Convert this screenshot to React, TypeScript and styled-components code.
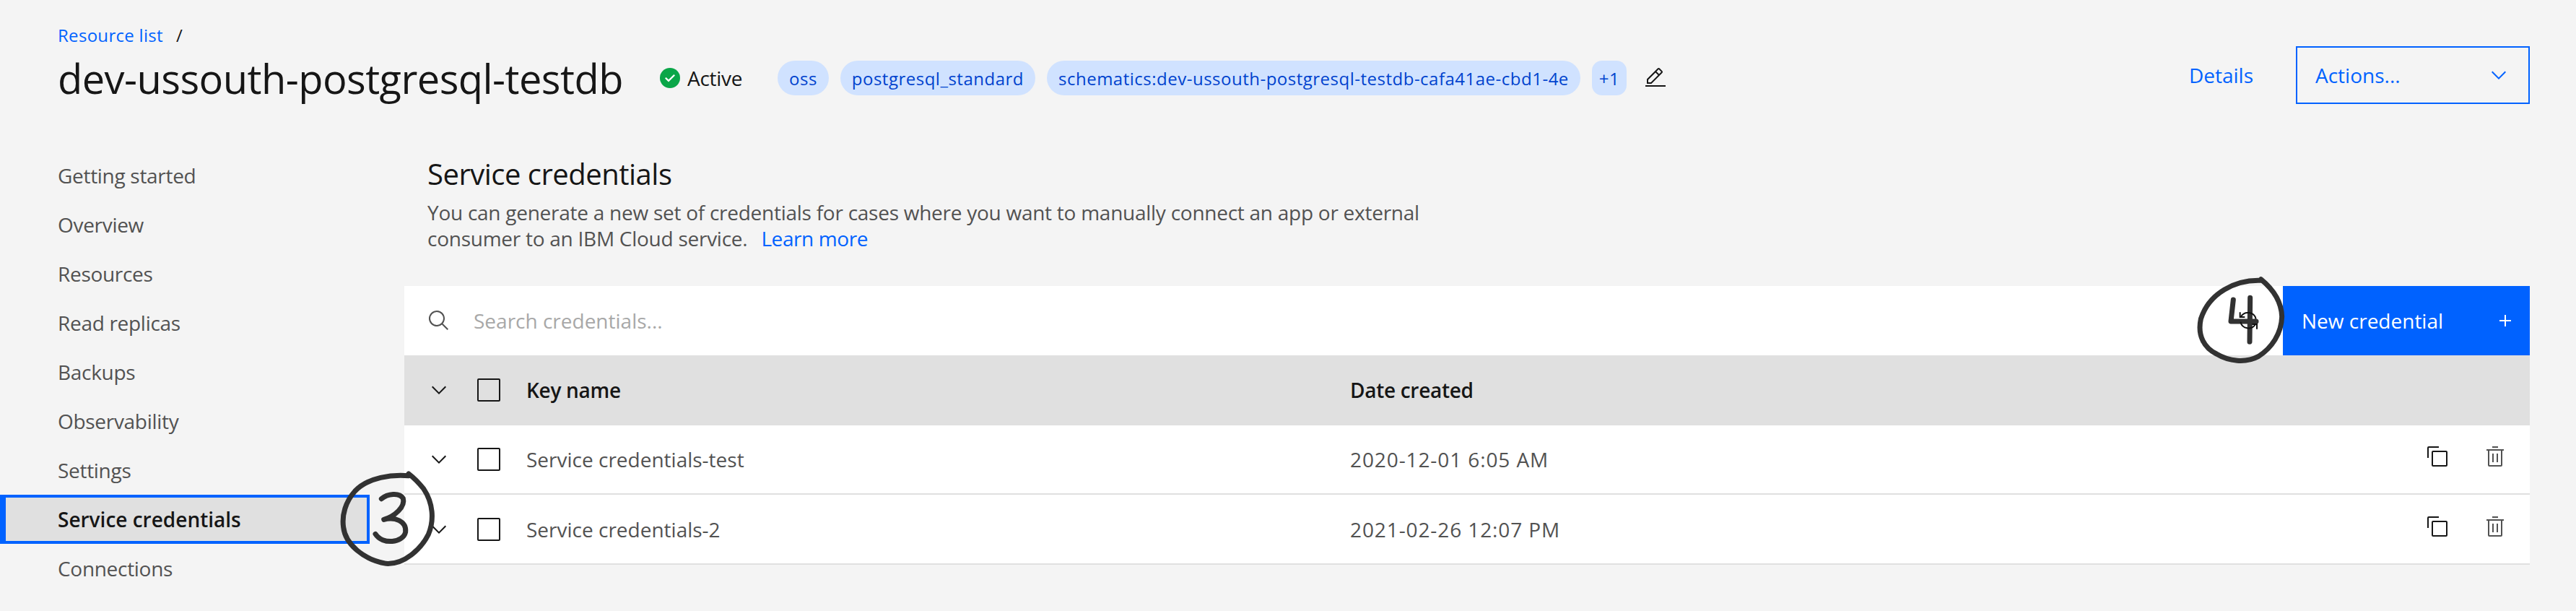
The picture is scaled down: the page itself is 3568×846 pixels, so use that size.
import React from "react";
import styled, { createGlobalStyle } from "styled-components";

const navItems = [
  "Getting started",
  "Overview",
  "Resources",
  "Read replicas",
  "Backups",
  "Observability",
  "Settings",
  "Service credentials",
  "Connections",
];

const tags = ["oss", "postgresql_standard", "schematics:dev-ussouth-postgresql-testdb-cafa41ae-cbd1-4e"];

const credentials = [
  { name: "Service credentials-test", date: "2020-12-01 6:05 AM" },
  { name: "Service credentials-2", date: "2021-02-26 12:07 PM" },
];

const Chevron = () => (
  <Icon viewBox="0 0 32 32">
    <path d="M16 22L6 12l1.4-1.4 8.6 8.6 8.6-8.6L26 12z" />
  </Icon>
);

const App: React.FC = () => {
  return (
    <Page>
      <GlobalStyle />
      <Header>
        <TitleBlock>
          <Breadcrumb>
            <BlueLink>Resource list</BlueLink>
            <Slash>/</Slash>
          </Breadcrumb>
          <TitleRow>
            <Title>dev-ussouth-postgresql-testdb</Title>
            <Status>
              <Icon viewBox="0 0 32 32">
                <circle cx="16" cy="16" r="14" fill="#0aa648" />
                <path fill="#fff" d="M14 21.5l-5-5 1.6-1.6 3.4 3.4 7.4-7.4 1.6 1.6z" />
              </Icon>
              <StatusText>Active</StatusText>
            </Status>
            <Tags>
              {tags.map((t) => (
                <Tag key={t}>{t}</Tag>
              ))}
              <MoreTag>+1</MoreTag>
            </Tags>
            <EditIcon viewBox="0 0 32 32">
              <path d="M2 26h28v2H2zM25.4 9c.8-.8.8-2 0-2.8l-3.6-3.6c-.8-.8-2-.8-2.8 0l-15 15V24h6.4l15-15zm-5-5L24 7.6l-3 3L17.4 7l3-3zM6 22v-3.6l10-10 3.6 3.6-10 10H6z" />
            </EditIcon>
          </TitleRow>
        </TitleBlock>
        <HeaderActions>
          <DetailsLink>Details</DetailsLink>
          <ActionsSelect>
            <span>Actions...</span>
            <Chevron />
          </ActionsSelect>
        </HeaderActions>
      </Header>

      <Body>
        <Sidebar>
          {navItems.map((item) => (
            <NavItem key={item} $active={item === "Service credentials"}>
              {item}
            </NavItem>
          ))}
        </Sidebar>
        <Main>
          <Intro>
            <SectionTitle>Service credentials</SectionTitle>
            <Description>
              You can generate a new set of credentials for cases where you want to manually connect an app or external
              <br />
              consumer to an IBM Cloud service.
              <LearnMore>Learn more</LearnMore>
            </Description>
          </Intro>
          <Toolbar>
            <SearchArea>
              <Icon viewBox="0 0 32 32" $color="#525252">
                <path d="M29 27.586l-7.552-7.552a11.018 11.018 0 1 0-1.414 1.414L27.586 29zM4 13a9 9 0 1 1 9 9 9.01 9.01 0 0 1-9-9z" />
              </Icon>
              <Placeholder>Search credentials...</Placeholder>
            </SearchArea>
            <PrimaryButton>
              <span>New credential</span>
              <Icon viewBox="0 0 32 32" $color="#fff">
                <path d="M17 15V8h-2v7H8v2h7v7h2v-7h7v-2h-7z" />
              </Icon>
            </PrimaryButton>
          </Toolbar>
          <HeaderRow>
            <ChevronCell>
              <Chevron />
            </ChevronCell>
            <Checkbox />
            <HeadCell>Key name</HeadCell>
            <HeadCell>Date created</HeadCell>
          </HeaderRow>
          {credentials.map((c) => (
            <Row key={c.name}>
              <ChevronCell>
                <Chevron />
              </ChevronCell>
              <Checkbox />
              <Cell>{c.name}</Cell>
              <DateCell>{c.date}</DateCell>
              <RowActions>
                <Icon viewBox="0 0 32 32">
                  <path d="M28 10v18H10V10h18m0-2H10a2 2 0 0 0-2 2v18a2 2 0 0 0 2 2h18a2 2 0 0 0 2-2V10a2 2 0 0 0-2-2z" />
                  <path d="M4 18H2V4a2 2 0 0 1 2-2h14v2H4z" />
                </Icon>
                <Icon viewBox="0 0 32 32" $color="#525252">
                  <path d="M12 12h2v12h-2zM18 12h2v12h-2z" />
                  <path d="M4 6v2h2v20a2 2 0 0 0 2 2h16a2 2 0 0 0 2-2V8h2V6zm4 22V8h16v20zM12 2h8v2h-8z" />
                </Icon>
              </RowActions>
            </Row>
          ))}
        </Main>
      </Body>

      {/* hand drawn step markers on top of the screenshot */}
      <StepThree viewBox="0 0 720 510">
        <path d="M318 56C250 50 150 62 95 120C55 165 40 220 47 270C55 340 130 405 225 421C300 425 370 360 400 300C425 240 420 170 380 110C360 85 340 65 318 48" />
        <path d="M205 152C230 130 280 125 295 150C305 185 260 225 215 238C260 225 310 245 305 290C295 335 210 345 180 298" />
      </StepThree>
      <StepFour viewBox="0 0 510 420">
        <path d="M300 40C200 38 90 90 55 200C40 270 70 320 120 345C170 375 240 385 295 355C350 320 390 260 392 190C390 130 360 80 305 35" />
        <path d="M190 120L180 210L285 210" />
        <path d="M260 112L258 295" />
        <Cursor d="M222 190A34 34 0 0 1 284 200M282 222A34 34 0 0 1 220 212" />
        <Cursor d="M218 172V192H238M288 242V222H268" />
      </StepFour>
    </Page>
  );
};

export default App;

const FONT = `"Open Sans", "Noto Sans", sans-serif`;
const BLUE = "#0062ff";

const GlobalStyle = createGlobalStyle`
  html, body {
    margin: 0;
    padding: 0;
    background: #f4f4f4;
  }
`;

const Page = styled.div`
  position: relative;
  width: 3568px;
  height: 846px;
  overflow: hidden;
  background: #f4f4f4;
  color: #161616;
  font-family: ${FONT};
  font-size: 28px;
`;

const Icon = styled.svg<{ $color?: string }>`
  display: block;
  flex: none;
  width: 32px;
  height: 32px;
  fill: ${({ $color }) => $color || "currentColor"};
`;

const Header = styled.header`
  display: flex;
  justify-content: space-between;
  align-items: flex-start;
  height: 209px;
  padding: 0 64px 0 80px;
`;
const TitleBlock = styled.div`
  display: flex;
  flex-direction: column;
  padding-top: 33px;
`;
const Breadcrumb = styled.div`
  display: flex;
  height: 30px;
  align-items: center;
  font-size: 24px;
  letter-spacing: 0.3px;
`;
const BlueLink = styled.a`
  color: ${BLUE};
`;
const Slash = styled.span`
  margin-left: 18px;
`;
const TitleRow = styled.div`
  display: flex;
  align-items: center;
  height: 74px;
  margin-top: 8px;
`;
const Title = styled.h1`
  margin: 0;
  width: 834px;
  font-size: 56px;
  font-weight: 400;
  white-space: nowrap;
  letter-spacing: -0.55px;
`;
const Status = styled.div`
  display: flex;
  align-items: center;
  gap: 8px;
  width: 165px;
  margin-left: -2px;
`;
const StatusText = styled.span`
  letter-spacing: -0.3px;
`;
const Tags = styled.div`
  display: flex;
  gap: 16px;
`;
const Tag = styled.span`
  display: flex;
  align-items: center;
  height: 48px;
  padding: 0 16px;
  border-radius: 24px;
  background: #d0e2ff;
  color: #0043ce;
  font-size: 24px;
  letter-spacing: 0.5px;
  white-space: nowrap;
`;
const MoreTag = styled(Tag)`
  padding: 0 10px;
  border-radius: 14px;
`;
const EditIcon = styled(Icon)`
  margin-left: 24px;
`;

const HeaderActions = styled.div`
  display: flex;
  align-items: center;
  padding-top: 64px;
`;
const DetailsLink = styled.a`
  margin-right: 59px;
  color: ${BLUE};
`;
const ActionsSelect = styled.div`
  box-sizing: border-box;
  display: flex;
  justify-content: space-between;
  align-items: center;
  width: 324px;
  height: 80px;
  padding: 0 25px;
  border: 2px solid ${BLUE};
  color: ${BLUE};
`;

const Body = styled.div`
  display: flex;
`;
const Sidebar = styled.nav`
  flex: none;
  width: 560px;
`;
const NavItem = styled.div<{ $active?: boolean }>`
  box-sizing: border-box;
  display: flex;
  align-items: center;
  width: 512px;
  height: 68px;
  padding-left: ${({ $active }) => ($active ? "72px" : "80px")};
  color: ${({ $active }) => ($active ? "#161616" : "#525252")};
  font-weight: ${({ $active }) => ($active ? 600 : 400)};
  letter-spacing: ${({ $active }) => ($active ? "0" : "-0.3px")};
  background: ${({ $active }) => ($active ? "#e0e0e0" : "transparent")};
  border: ${({ $active }) => ($active ? `4px solid ${BLUE}` : "none")};
  border-left-width: ${({ $active }) => ($active ? "8px" : "0")};
`;
const Main = styled.main`
  flex: 1;
  padding-right: 64px;
`;
const Intro = styled.div`
  height: 187px;
  padding-left: 32px;
`;
const SectionTitle = styled.h2`
  margin: 0;
  height: 67px;
  line-height: 64px;
  font-size: 40px;
  font-weight: 400;
  letter-spacing: -0.5px;
`;
const Description = styled.p`
  margin: 0;
  line-height: 36px;
  color: #525252;
  letter-spacing: -0.26px;
`;
const LearnMore = styled.a`
  margin-left: 19px;
  color: ${BLUE};
  letter-spacing: -0.4px;
`;
const Toolbar = styled.div`
  display: flex;
  height: 96px;
  background: #fff;
`;
const SearchArea = styled.div`
  flex: 1;
  display: flex;
  align-items: center;
  gap: 32px;
  padding-left: 32px;
`;
const Placeholder = styled.span`
  color: #a8a8a8;
`;
const PrimaryButton = styled.div`
  box-sizing: border-box;
  display: flex;
  justify-content: space-between;
  align-items: center;
  width: 342px;
  padding: 0 18px 0 26px;
  background: ${BLUE};
  color: #fff;
`;
const HeaderRow = styled.div`
  display: grid;
  grid-template-columns: 101px 68px 1141px 1fr;
  align-items: center;
  height: 96.67px;
  background: #e0e0e0;
`;
const Row = styled.div`
  box-sizing: border-box;
  display: grid;
  grid-template-columns: 101px 68px 1141px 1fr auto;
  align-items: center;
  height: 96.67px;
  background: #fff;
  border-bottom: 2px solid #e0e0e0;
`;
const ChevronCell = styled.div`
  padding-left: 32px;
`;
const Checkbox = styled.div`
  box-sizing: border-box;
  width: 32px;
  height: 32px;
  border: 2px solid #161616;
  border-radius: 2px;
`;
const HeadCell = styled.div`
  font-weight: 600;
  letter-spacing: -0.3px;
`;
const Cell = styled.div`
  color: #525252;
`;
const DateCell = styled(Cell)`
  letter-spacing: 0.9px;
`;
const RowActions = styled.div`
  display: flex;
  gap: 48px;
  padding: 0 32px 8px 0;
`;

const StepThree = styled.svg`
  position: absolute;
  left: 460px;
  top: 640px;
  width: 240px;
  height: 170px;
  fill: none;
  stroke: #323232;
  stroke-width: 21;
  stroke-linecap: round;
  stroke-linejoin: round;
`;
const StepFour = styled.svg`
  position: absolute;
  left: 3030px;
  top: 375px;
  width: 170px;
  height: 140px;
  fill: none;
  stroke: #323232;
  stroke-width: 21;
  stroke-linecap: round;
  stroke-linejoin: round;
`;
const Cursor = styled.path`
  stroke: #111;
  stroke-width: 6;
  stroke-linecap: butt;
  stroke-linejoin: miter;
`;
